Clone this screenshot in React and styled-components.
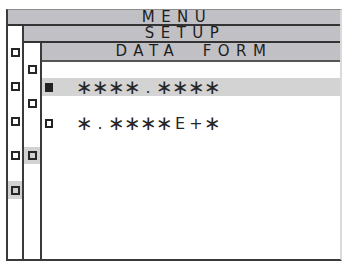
import styled, { createGlobalStyle } from 'styled-components'

const GlobalStyle = createGlobalStyle`
	html, body {
		margin: 0;
		padding: 0;
		background: #fff;
	}
	body {
		width: 342px;
		height: 262px;
		overflow: hidden;
		font-family: "DejaVu Sans", sans-serif;
		color: #222;
	}
`

const Frame = styled.div`
	box-sizing: border-box;
	margin: 9px 0 0 6px;
	width: 336px;
	height: 252px;
	display: flex;
	flex-direction: column;
	border-top: 1px solid #8c8c8c;
	border-left: 2px solid #3a3a3a;
	border-bottom: 2px solid #3a3a3a;
	border-right: 2px solid #dadada;
`

const Bar = styled.div`
	box-sizing: border-box;
	height: ${(p) => p.$h}px;
	flex: none;
	display: flex;
	align-items: center;
	justify-content: center;
	background: #c1c1c5;
	border-bottom: 2px solid ${(p) => p.$line || '#333'};
	font-size: 15px;
	line-height: 13px;
	letter-spacing: 6.5px;
	padding-left: 6px;
	white-space: pre;
	color: #1e1e1e;
`

const Row = styled.div`
	flex: 1;
	display: flex;
	min-height: 0;
`

const Stack = styled.div`
	flex: 1;
	display: flex;
	flex-direction: column;
	min-width: 0;
`

const SideColumn = styled.div`
	box-sizing: border-box;
	width: ${(p) => p.$w}px;
	flex: none;
	display: flex;
	flex-direction: column;
	padding-top: 17.4px;
	border-right: 2px solid #3a3a3a;
`

const Slot = styled.div`
	height: 17.25px;
	display: flex;
	align-items: center;
	justify-content: center;
	background: ${(p) => (p.$active ? '#d2d2d2' : 'transparent')};
`

const Box = styled.span`
	box-sizing: border-box;
	display: block;
	width: 9px;
	height: 9px;
	border: 2px solid #262626;
	background: ${(p) => (p.$active ? '#cfcfcf' : '#fff')};
`

const Main = styled.div`
	flex: 1;
	display: flex;
	flex-direction: column;
	gap: 18px;
	padding-top: 16px;
`

const Item = styled.div`
	height: 18px;
	display: flex;
	align-items: center;
	padding-left: 3px;
	background: ${(p) => (p.$selected ? '#d3d3d3' : 'transparent')};
`

const Marker = styled.span`
	box-sizing: border-box;
	width: 8px;
	height: 9px;
	flex: none;
	border: 2px solid #222;
	background: ${(p) => (p.$filled ? '#222' : '#fff')};
`

const Value = styled.span`
	margin-left: 23px;
	display: flex;
	align-items: center;
	height: 18px;
`

const Char = styled.span`
	width: 16px;
	text-align: center;
	font-family: "DejaVu Sans", sans-serif;
	font-size: ${(p) => (p.$star ? 20 : 16)}px;
	line-height: 18px;
	height: 18px;
	color: #262626;
	position: relative;
	top: ${(p) => (p.$star ? 0 : 1)}px;
`

const col1 = [true, false, true, false, true, false, true, false, 'active']
const col2 = [true, false, true, false, false, 'active']

const Side = ({ slots, w }) => (
	<SideColumn $w={w}>
		{slots.map((s, i) => (
			<Slot key={i} $active={s === 'active'}>
				{s && <Box $active={s === 'active'} />}
			</Slot>
		))}
	</SideColumn>
)

const items = [
	{ text: '∗∗∗∗.∗∗∗∗', selected: true },
	{ text: '∗.∗∗∗∗E+∗', selected: false },
]

const App = () => {
	return (
		<>
			<GlobalStyle />
			<Frame>
				<Bar $h={16}>MENU</Bar>
				<Row>
					<Side slots={col1} w={16} />
					<Stack>
						<Bar $h={17}>SETUP</Bar>
						<Row>
							<Side slots={col2} w={18} />
							<Stack>
								<Bar $h={19} $line="#555">{'DATA  FORM'}</Bar>
								<Main>
									{items.map((it) => (
										<Item key={it.text} $selected={it.selected}>
											<Marker $filled={it.selected} />
											<Value>
												{[...it.text].map((c, i) => (
													<Char key={i} $star={c === '∗'}>
														{c}
													</Char>
												))}
											</Value>
										</Item>
									))}
								</Main>
							</Stack>
						</Row>
					</Stack>
				</Row>
			</Frame>
		</>
	)
}

export default App
